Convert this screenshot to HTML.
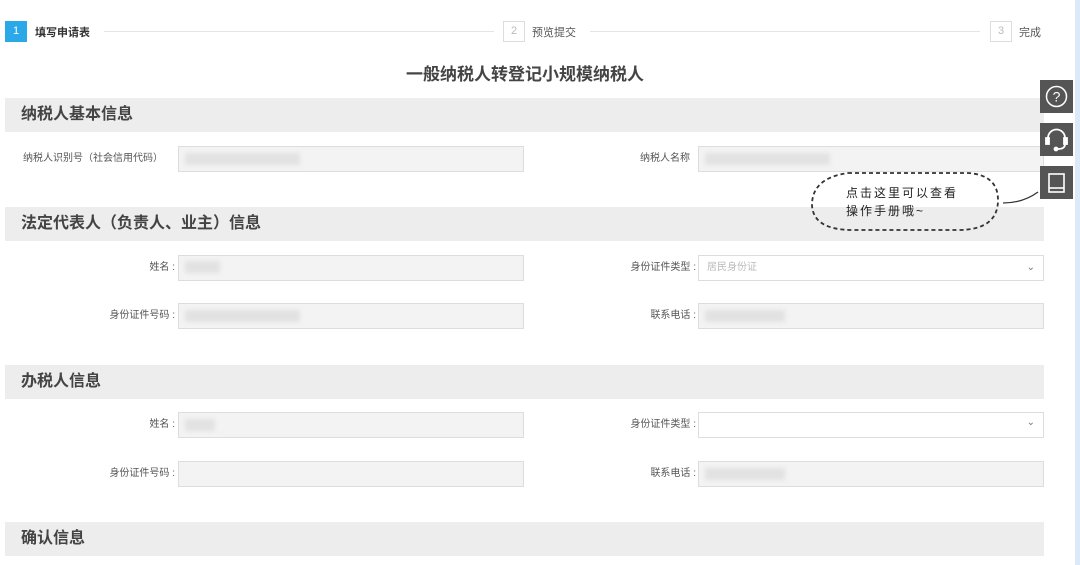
<!DOCTYPE html><html><head><meta charset="utf-8"><style>
body{margin:0;width:1080px;height:565px;background:#fff;position:relative;overflow:hidden;font-family:"Liberation Sans","Noto Sans CJK SC",sans-serif;color:#555}
.a{position:absolute}
.bar{position:absolute;left:5px;width:1039px;height:34px;background:#ededed;font-size:16px;font-weight:bold;color:#444;line-height:34px;text-indent:16px}
.in{position:absolute;height:26px;background:#f3f3f3;border:1px solid #ddd;box-sizing:border-box}
.lb{position:absolute;font-size:10px;color:#555;text-align:right;line-height:26px}
.blur{position:absolute;background:#e2e2e2;height:12px;filter:blur(2px)}
.ic{position:absolute;left:1040px;width:33px;height:33px;background:#555}
</style></head><body>
<div class="a" style="left:5px;top:21px;width:22px;height:21px;background:#2aa8e8;color:#fff;font-size:11px;line-height:21px;text-align:center">1</div>
<div class="a" style="left:35px;top:24px;font-size:11px;color:#333;font-weight:bold">填写申请表</div>
<div class="a" style="left:104px;top:31px;width:390px;height:1px;background:#e5e5e5"></div>
<div class="a" style="left:503px;top:21px;width:20px;height:19px;border:1px solid #ddd;color:#bbb;font-size:11px;line-height:19px;text-align:center">2</div>
<div class="a" style="left:532px;top:24px;font-size:11px;color:#555">预览提交</div>
<div class="a" style="left:590px;top:31px;width:390px;height:1px;background:#e5e5e5"></div>
<div class="a" style="left:990px;top:21px;width:20px;height:19px;border:1px solid #ddd;color:#bbb;font-size:11px;line-height:19px;text-align:center">3</div>
<div class="a" style="left:1019px;top:24px;font-size:11px;color:#555">完成</div>
<div class="a" style="left:0;width:1050px;top:60px;text-align:center;font-size:17px;font-weight:bold;color:#444">一般纳税人转登记小规模纳税人</div>

<div class="bar" style="top:98px">纳税人基本信息</div>
<div class="lb" style="left:5px;width:165px;top:146px;text-align:left;padding-left:18px">纳税人识别号（社会信用代码）</div>
<div class="in" style="left:178px;top:146px;width:346px"></div><div class="blur" style="left:185px;top:153px;width:115px"></div>
<div class="lb" style="left:560px;width:130px;top:146px">纳税人名称</div>
<div class="in" style="left:698px;top:146px;width:346px"></div><div class="blur" style="left:705px;top:153px;width:125px"></div>

<div class="bar" style="top:207px">法定代表人（负责人、业主）信息</div>
<div class="lb" style="left:40px;width:135px;top:255px">姓名 :</div>
<div class="in" style="left:178px;top:255px;width:346px"></div><div class="blur" style="left:185px;top:261px;width:35px"></div>
<div class="lb" style="left:560px;width:136px;top:255px">身份证件类型 :</div>
<div class="in" style="left:698px;top:255px;width:346px;background:#fff;font-size:10px;color:#bbb;line-height:24px;padding-left:8px">居民身份证<span style="position:absolute;right:8px;color:#777">⌄</span></div>
<div class="lb" style="left:40px;width:135px;top:303px">身份证件号码 :</div>
<div class="in" style="left:178px;top:303px;width:346px"></div><div class="blur" style="left:185px;top:310px;width:115px"></div>
<div class="lb" style="left:560px;width:136px;top:303px">联系电话 :</div>
<div class="in" style="left:698px;top:303px;width:346px"></div><div class="blur" style="left:705px;top:310px;width:80px"></div>

<div class="bar" style="top:365px">办税人信息</div>
<div class="lb" style="left:40px;width:135px;top:412px">姓名 :</div>
<div class="in" style="left:178px;top:412px;width:346px"></div><div class="blur" style="left:185px;top:419px;width:30px"></div>
<div class="lb" style="left:560px;width:136px;top:412px">身份证件类型 :</div>
<div class="in" style="left:698px;top:412px;width:346px;background:#fff"><span style="position:absolute;right:8px;top:4px;color:#777;font-size:10px">⌄</span></div>
<div class="lb" style="left:40px;width:135px;top:461px">身份证件号码 :</div>
<div class="in" style="left:178px;top:461px;width:346px"></div>
<div class="lb" style="left:560px;width:136px;top:461px">联系电话 :</div>
<div class="in" style="left:698px;top:461px;width:346px"></div><div class="blur" style="left:705px;top:468px;width:80px"></div>

<div class="bar" style="top:522px">确认信息</div>

<div class="a" style="left:1075px;top:0;width:5px;height:565px;background:#dde8f8"></div>
<div class="ic" style="top:80px"><svg width="33" height="33"><circle cx="16.5" cy="16.5" r="10" fill="none" stroke="#fff" stroke-width="1.5"/><text x="16.5" y="21.5" font-size="14" fill="#fff" text-anchor="middle" font-family="Liberation Sans">?</text></svg></div>
<div class="ic" style="top:123px"><svg width="33" height="33" fill="none" stroke="#fff" stroke-width="1.8"><path d="M8 18 V15 a8.5 8.5 0 0 1 17 0 V18"/><rect x="6" y="15" width="3" height="6" fill="#fff"/><rect x="24" y="15" width="3" height="6" fill="#fff"/><path d="M25 21 q0 5 -7 5"/><circle cx="16" cy="26" r="1.5" fill="#fff"/></svg></div>
<div class="ic" style="top:166px"><svg width="33" height="33" fill="none" stroke="#fff" stroke-width="1.6"><rect x="9" y="8" width="15" height="18"/><path d="M9 22 H24"/></svg></div>
<svg class="a" style="left:808px;top:170px" width="235" height="65" fill="none" stroke="#333" stroke-width="1.8" stroke-dasharray="4 3"><path d="M40 3 H160 Q190 5 190 30 Q190 60 150 60 H45 Q5 60 4 35 Q4 8 40 3 Z"/><path d="M195 33 Q215 33 230 22" stroke-dasharray="none" stroke-width="1.3"/></svg>
<div class="a" style="left:846px;top:184px;font-size:12px;color:#222;letter-spacing:2px;line-height:18px">点击这里可以查看<br>操作手册哦~</div>
</body></html>
